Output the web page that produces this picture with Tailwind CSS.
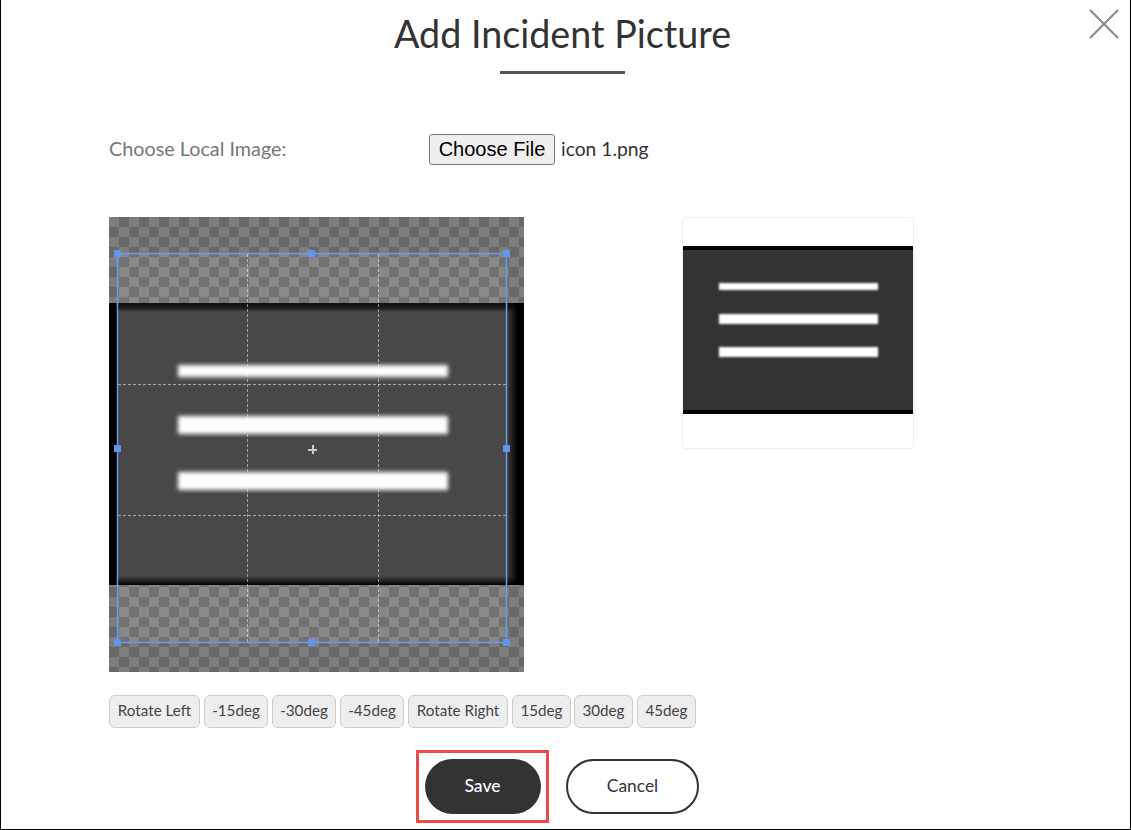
<!DOCTYPE html>
<html lang="en">
<head>
  <meta charset="UTF-8">
  <meta name="viewport" content="width=device-width, initial-scale=1.0">
  <title>Add Incident Picture</title>
  <script src="https://cdn.jsdelivr.net/npm/@tailwindcss/browser@4"></script>
</head>
<body class="bg-white font-['Lato',sans-serif]">
  <div class="relative w-[1131px] h-[830px] overflow-hidden border border-t-0 border-black bg-white">
    <!-- close -->
    <button class="absolute left-[1087px] top-[9px] w-[32px] h-[30px]" aria-label="Close">
      <svg width="32" height="30" viewBox="0 0 32 30" fill="none" stroke="#8a8a8a" stroke-width="2"><path d="M2 1 L30 29 M30 1 L2 29"/></svg>
    </button>

    <!-- heading -->
    <div class="flex flex-col items-center w-[1123px]">
      <h1 class="text-[37.7px] leading-[44px] mt-[12px] text-[#333]">Add Incident Picture</h1>
      <div class="w-[125px] h-[3px] bg-[#555] mt-[15px]"></div>
    </div>

    <!-- file row -->
    <div class="flex items-center ml-[108px] mt-[59px] h-[32px]">
      <label class="w-[320px] pb-[2px] text-[19.8px] leading-[30px] text-[#777]">Choose Local Image:</label>
      <button class="w-[126px] h-[31px] bg-[#efefef] border border-[#767676] rounded-[3px] text-[20px] leading-none text-black font-['Liberation_Sans',sans-serif]">Choose File</button>
      <span class="ml-[6px] text-[19.3px] leading-[30px] text-[#333]">icon 1.png</span>
    </div>

    <!-- cropper + preview -->
    <div class="flex ml-[108px] mt-[52px]">
      <div class="relative w-[415px] h-[455px] overflow-hidden bg-[repeating-conic-gradient(#727272_0_25%,#888888_0_50%)] bg-[length:20px_20px]">
        <div class="mt-[86px] h-[282px] bg-black pl-[9px] pr-[6px]">
          <div class="h-full bg-[linear-gradient(to_bottom,#111_0px,#1c1c1c_5px,#484848_9px,#484848_273px,#000_282px)]">
            <div class="h-full bg-[linear-gradient(to_right,transparent_388px,#000_400px)] pt-[62px]">
              <div class="ml-[60px] w-[270px] h-[12px] bg-white blur-[2px]"></div>
              <div class="ml-[60px] w-[270px] h-[18px] mt-[39px] bg-white blur-[2px]"></div>
              <div class="ml-[60px] w-[270px] h-[18px] mt-[38px] bg-white blur-[2px]"></div>
            </div>
          </div>
        </div>

        <!-- crop box -->
        <div class="absolute left-[8px] top-[36px] w-[390px] h-[390px] shadow-[0_0_0_600px_rgba(0,0,0,0.08)]">
          <div class="absolute left-[130px] top-px bottom-px border-l border-dashed border-white/50"></div>
          <div class="absolute left-[261px] top-px bottom-px border-l border-dashed border-white/50"></div>
          <div class="absolute top-[131px] left-px right-px border-t border-dashed border-white/50"></div>
          <div class="absolute top-[262px] left-px right-px border-t border-dashed border-white/50"></div>
          <div class="absolute left-0 right-0 top-0 h-px bg-[#6d9bf1] shadow-[0_0_0_1px_rgba(100,149,237,0.25)]"></div>
          <div class="absolute left-0 right-0 bottom-0 h-px bg-[#6d9bf1] shadow-[0_0_0_1px_rgba(100,149,237,0.25)]"></div>
          <div class="absolute left-0 top-0 bottom-0 w-px bg-[#6d9bf1] shadow-[0_0_0_1px_rgba(100,149,237,0.25)]"></div>
          <div class="absolute right-0 top-0 bottom-0 w-px bg-[#6d9bf1] shadow-[0_0_0_1px_rgba(100,149,237,0.25)]"></div>
          <div class="absolute left-[191px] top-[196px] w-[9px] h-[2px] bg-[#cccccc]"></div>
          <div class="absolute left-[195px] top-[192px] w-[2px] h-[9px] bg-[#cccccc]"></div>
          <div class="absolute -left-[3px] -top-[3px] w-[7px] h-[7px] bg-[#6495ed]"></div>
          <div class="absolute left-[191px] -top-[3px] w-[7px] h-[7px] bg-[#6495ed]"></div>
          <div class="absolute -right-[3px] -top-[3px] w-[7px] h-[7px] bg-[#6495ed]"></div>
          <div class="absolute -left-[3px] top-[192px] w-[7px] h-[7px] bg-[#6495ed]"></div>
          <div class="absolute -right-[3px] top-[192px] w-[7px] h-[7px] bg-[#6495ed]"></div>
          <div class="absolute -left-[3px] -bottom-[3px] w-[7px] h-[7px] bg-[#6495ed]"></div>
          <div class="absolute left-[191px] -bottom-[3px] w-[7px] h-[7px] bg-[#6495ed]"></div>
          <div class="absolute -right-[3px] -bottom-[3px] w-[7px] h-[7px] bg-[#6495ed]"></div>
        </div>
      </div>

      <!-- preview -->
      <div class="ml-[158px] w-[232px] h-[232px] border border-[#eeeeee] rounded-[4px] overflow-hidden">
        <div class="mt-[28px] h-[168px] bg-[#333] border-y-[4px] border-black pt-[33px]">
          <div class="ml-[36px] w-[159px] h-[7px] bg-white blur-[1.2px]"></div>
          <div class="ml-[36px] w-[159px] h-[10px] mt-[24px] bg-white blur-[1.2px]"></div>
          <div class="ml-[36px] w-[159px] h-[10px] mt-[23px] bg-white blur-[1.2px]"></div>
        </div>
      </div>
    </div>

    <!-- rotate buttons -->
    <div class="flex gap-[4px] ml-[108px] mt-[23px] text-[15.2px] leading-[20px] text-[#444]">
      <button class="w-[91px] h-[33px] pb-[3px] bg-[#eeeeee] border border-[#cccccc] rounded-[6px]">Rotate Left</button>
      <button class="w-[64px] h-[33px] pb-[3px] bg-[#eeeeee] border border-[#cccccc] rounded-[6px]">-15deg</button>
      <button class="w-[64px] h-[33px] pb-[3px] bg-[#eeeeee] border border-[#cccccc] rounded-[6px]">-30deg</button>
      <button class="w-[64px] h-[33px] pb-[3px] bg-[#eeeeee] border border-[#cccccc] rounded-[6px]">-45deg</button>
      <button class="w-[100px] h-[33px] pb-[3px] bg-[#eeeeee] border border-[#cccccc] rounded-[6px]">Rotate Right</button>
      <button class="w-[59px] h-[33px] pb-[3px] bg-[#eeeeee] border border-[#cccccc] rounded-[6px]">15deg</button>
      <button class="w-[59px] h-[33px] pb-[3px] -ml-px bg-[#eeeeee] border border-[#cccccc] rounded-[6px]">30deg</button>
      <button class="w-[59px] h-[33px] pb-[3px] bg-[#eeeeee] border border-[#cccccc] rounded-[6px]">45deg</button>
    </div>

    <!-- actions -->
    <div class="flex items-center ml-[415px] mt-[22px]">
      <div class="w-[133px] h-[73px] border-[3px] border-[#ea4a4a] flex items-center justify-center">
        <button class="w-[116px] h-[55px] rounded-full bg-[#333] text-white text-[17.6px] font-medium">Save</button>
      </div>
      <button class="ml-[17px] w-[133px] h-[55px] rounded-full border-2 border-[#333] bg-white text-[#333] text-[17.4px]">Cancel</button>
    </div>
  </div>
</body>
</html>
